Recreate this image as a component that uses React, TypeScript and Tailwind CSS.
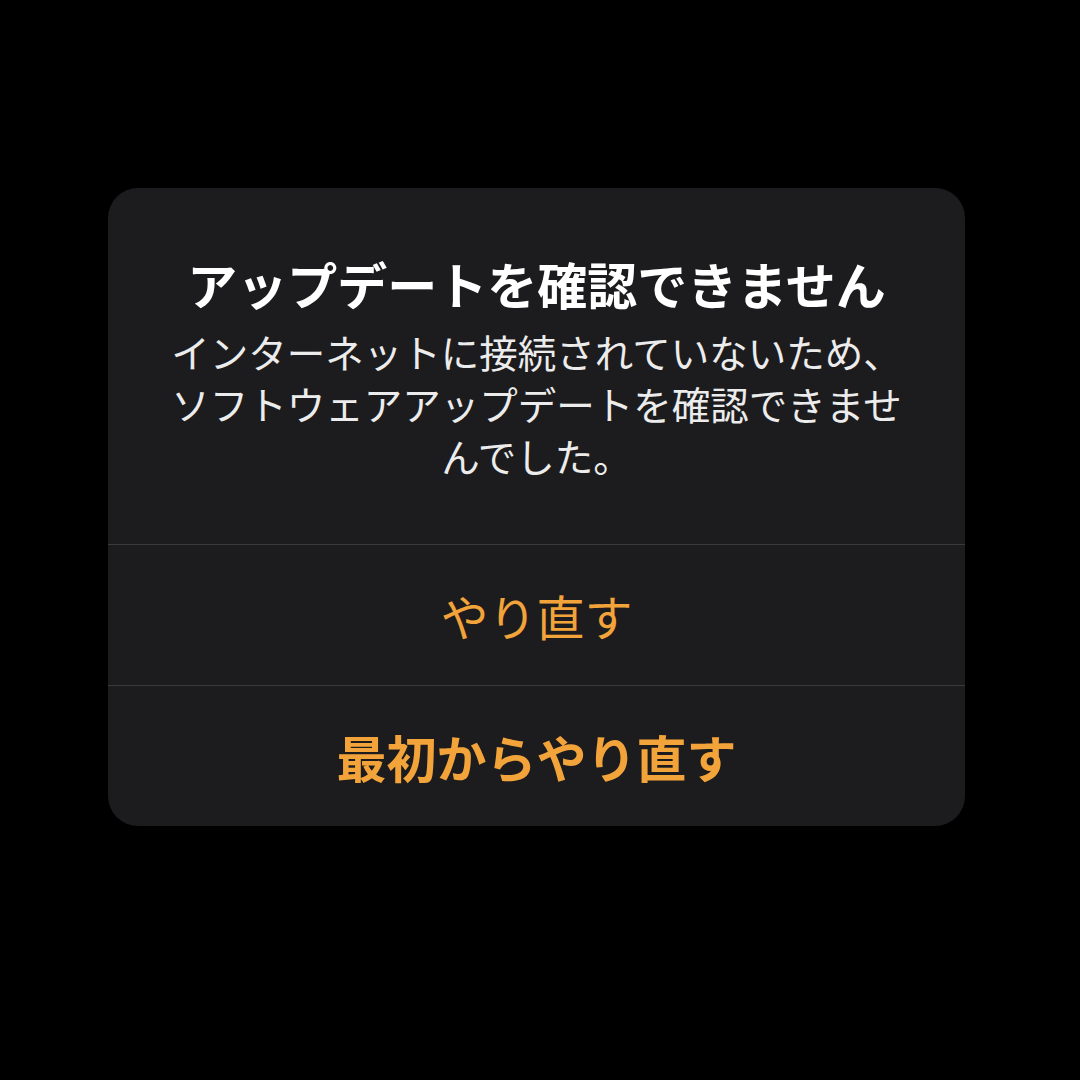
const font = "font-['Noto_Sans_CJK_JP','Noto_Sans',sans-serif]"

function ActionRow({ label, bold }: { label: string; bold?: boolean }) {
  return (
    <button
      className={`flex h-[141px] w-full items-center justify-center border-t border-[#3a3a3c] text-[#f2a33a] ${
        bold ? 'text-[50px] font-bold' : 'text-[48px] font-normal'
      }`}
    >
      {label}
    </button>
  )
}

export default function App() {
  return (
    <div className={`h-[1080px] w-[1080px] bg-black pl-[108px] pt-[188px] ${font}`}>
      <div className="flex w-[857px] flex-col overflow-hidden rounded-[30px] bg-[#1c1c1e]">
        <div className="px-[55px] pb-[63px] pt-[65px] text-center">
          <h1 className="text-[50px] font-bold leading-[60px] text-white">
            アップデートを確認できません
          </h1>
          <p className="mt-[12px] text-[38.5px] leading-[52px] text-[#ececec]">
            インターネットに接続されていないため、ソフトウェアアップデートを確認できませんでした。
          </p>
        </div>
        <ActionRow label="やり直す" />
        <ActionRow label="最初からやり直す" bold />
      </div>
    </div>
  )
}
